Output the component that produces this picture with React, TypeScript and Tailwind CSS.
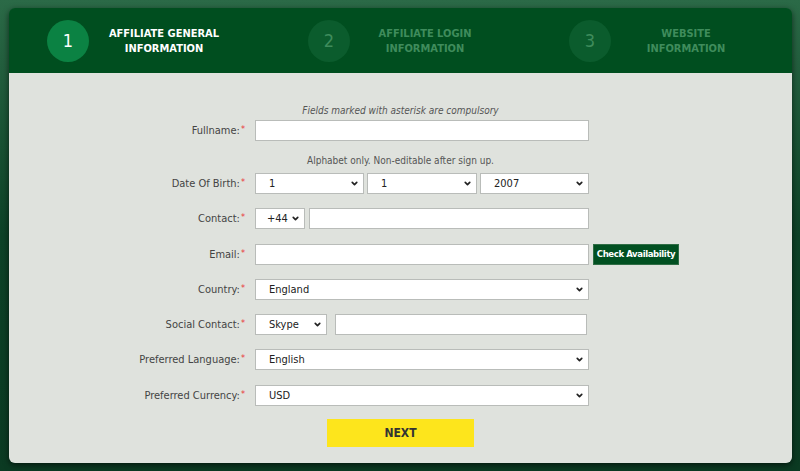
import { ChevronDown } from "lucide-react";

const font = { fontFamily: '"DejaVu Sans Condensed", "Liberation Sans", sans-serif' };

function Label({ text }: { text: string }) {
  return (
    <div className="relative top-[1px] w-[236px] shrink-0 text-right text-[11px] text-[#444]">
      {text}
      <span className="relative top-[-2px] ml-[1px] text-[9px] text-[#e8363a]">*</span>
    </div>
  );
}

function Select({ value, className, pl = "pl-[13px]" }: { value: string; className: string; pl?: string }) {
  return (
    <div className={`relative h-[21px] bg-white border border-[#b9bcb9] ${className}`}>
      <div className={`h-full flex items-center pt-[1px] text-[11px] text-[#222] ${pl}`}>{value}</div>
      <ChevronDown className="absolute right-[4px] top-[5px] w-[9px] h-[9px] text-[#222]" strokeWidth={4.5} />
    </div>
  );
}

function Input({ className }: { className: string }) {
  return <div className={`h-[21px] bg-white border border-[#b9bcb9] ${className}`} />;
}

function Row({ label, mt, children }: { label: string; mt: string; children: React.ReactNode }) {
  return (
    <div className={`flex items-center gap-[10px] ${mt}`}>
      <Label text={label} />
      {children}
    </div>
  );
}

function Step({ n, title1, title2, active }: { n: string; title1: string; title2: string; active?: boolean }) {
  return (
    <div className="flex items-center pl-[38px]">
      <div
        className={`w-[42px] h-[42px] rounded-full flex items-center justify-center text-[18px] ${
          active ? "bg-[#0b8243] text-white" : "bg-[#0b5c2d] text-[#3f8c5c]"
        }`}
      >
        {n}
      </div>
      <div
        className={`ml-[19px] w-[112px] flex flex-col items-center text-[11px] font-bold leading-[15px] ${
          active ? "text-white" : "text-[#3f8c5c]"
        }`}
      >
        <span className="whitespace-nowrap">{title1}</span>
        <span className="whitespace-nowrap">{title2}</span>
      </div>
    </div>
  );
}

export default function App() {
  return (
    <div
      className="w-[800px] h-[471px] overflow-hidden bg-gradient-to-b from-[#2b6a47] via-[#0d4227] to-[#0b3a22] pt-[8px] px-[9px]"
      style={font}
    >
      <div className="w-[783px] rounded-[6px] shadow-[0_2px_6px_rgba(0,0,0,0.6)] overflow-hidden">
        <div className="h-[65px] bg-[#004e1f] grid grid-cols-3 items-center">
          <Step n="1" title1="AFFILIATE GENERAL" title2="INFORMATION" active />
          <Step n="2" title1="AFFILIATE LOGIN" title2="INFORMATION" />
          <Step n="3" title1="WEBSITE" title2="INFORMATION" />
        </div>
        <div className="h-[390px] bg-[#dfe2dd] pt-[31px] flex flex-col">
          <div className="text-center text-[10px] italic leading-[14px] text-[#555]">
            Fields marked with asterisk are compulsory
          </div>
          <Row label="Fullname:" mt="mt-[2px]">
            <Input className="w-[334px]" />
          </Row>
          <div className="mt-[13px] text-center text-[10px] leading-[14px] text-[#555]">
            Alphabet only. Non-editable after sign up.
          </div>
          <Row label="Date Of Birth:" mt="mt-[5px]">
            <div className="flex gap-[3px]">
              <Select value="1" className="w-[109px]" />
              <Select value="1" className="w-[110px]" />
              <Select value="2007" className="w-[109px]" />
            </div>
          </Row>
          <Row label="Contact:" mt="mt-[14px]">
            <div className="flex gap-[4px]">
              <Select value="+44" className="w-[50px]" pl="pl-[11px]" />
              <Input className="w-[280px]" />
            </div>
          </Row>
          <Row label="Email:" mt="mt-[15px]">
            <div className="flex gap-[4px]">
              <Input className="w-[334px]" />
              <button className="w-[86px] h-[21px] bg-[#015021] border border-[#2f6d45] text-white text-[9.5px] font-bold tracking-[-0.4px]">
                Check Availability
              </button>
            </div>
          </Row>
          <Row label="Country:" mt="mt-[14px]">
            <Select value="England" className="w-[334px]" />
          </Row>
          <Row label="Social Contact:" mt="mt-[14px]">
            <div className="flex gap-[8px]">
              <Select value="Skype" className="w-[72px]" />
              <Input className="w-[252px]" />
            </div>
          </Row>
          <Row label="Preferred Language:" mt="mt-[14px]">
            <Select value="English" className="w-[334px]" />
          </Row>
          <Row label="Preferred Currency:" mt="mt-[15px]">
            <Select value="USD" className="w-[334px]" />
          </Row>
          <div className="mt-[13px] flex justify-center">
            <button className="w-[147px] h-[28px] bg-[#fde51c] text-[#333] text-[12px] font-bold">NEXT</button>
          </div>
        </div>
      </div>
    </div>
  );
}
